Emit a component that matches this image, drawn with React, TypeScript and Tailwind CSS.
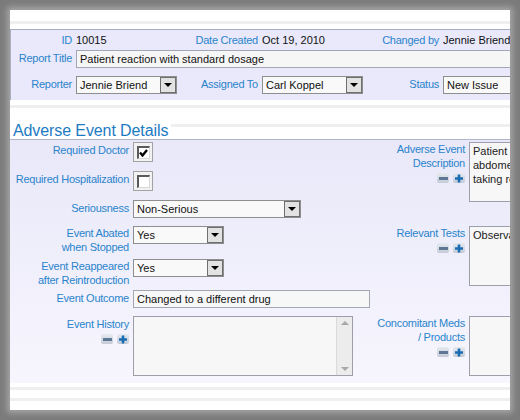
import React from 'react';

const LABEL = 'text-[#2a84cc] text-[11px] tracking-[-0.25px] text-right leading-[14px]';

function Select({ value, className }: { value: string; className: string }) {
  return (
    <div className={`flex items-center h-[18px] border border-[#8e8e8e] bg-[#f9f9f9] ${className}`}>
      <span className="flex-1 pl-[3px] text-[11px] text-[#111] leading-[16px] whitespace-nowrap overflow-hidden">{value}</span>
      <div className="w-[16px] h-[16px] border border-[#6f6f6f] bg-[#e2e2e2] flex items-center justify-center">
        <div className="w-0 h-0 border-l-[4px] border-r-[4px] border-t-[4px] border-l-transparent border-r-transparent border-t-black" />
      </div>
    </div>
  );
}

function Checkbox({ checked }: { checked?: boolean }) {
  return (
    <div className="w-[20px] h-[20px] border border-[#a2a2a2] bg-[#f2f2f2] flex items-center justify-center">
      <div className="w-[13px] h-[13px] border-t-2 border-l-2 border-r border-b border-t-[#5a5a5a] border-l-[#5a5a5a] border-r-[#d8d8d8] border-b-[#d8d8d8] bg-white flex items-center justify-center">
        {checked && (
          <svg width="9" height="8" viewBox="0 0 9 8">
            <path d="M1 3.5 L3.5 6.5 L8 1" stroke="#000" strokeWidth="2.4" fill="none" />
          </svg>
        )}
      </div>
    </div>
  );
}

function MinusPlus() {
  return (
    <div className="flex justify-end gap-[4px] mt-[3px]">
      <div className="w-[12px] h-[10px] rounded-[2px] bg-linear-to-b from-[#e6eaf0] to-[#c4cbd6] flex items-center justify-center">
        <div className="w-[9px] h-[3px] bg-[#5d7794]" />
      </div>
      <div className="w-[12px] h-[10px] rounded-[2px] bg-linear-to-b from-[#e6eaf0] to-[#c4cbd6] flex items-center justify-center">
        <svg width="10" height="9" viewBox="0 0 10 9">
          <path d="M5 0.5 V8.5 M1 4.5 H9" stroke="#1a6db3" strokeWidth="2.6" />
        </svg>
      </div>
    </div>
  );
}

function TextBox({ lines, className }: { lines: string[]; className: string }) {
  return (
    <div className={`border border-[#9c9eaa] bg-[#f7f7f7] pl-[3px] pt-[1px] text-[11px] leading-[14px] text-[#222] whitespace-nowrap overflow-hidden ${className}`}>
      {lines.map((l) => (
        <div key={l}>{l}</div>
      ))}
    </div>
  );
}

export default function App() {
  return (
    <div className="w-[520px] h-[420px] bg-[#7b7b7b] p-[10px] font-['Liberation_Sans',Arial,sans-serif]">
      <div className="w-[500px] h-[400px] bg-white overflow-hidden flex flex-col shadow-[0_0_6px_3px_#a6a6a6]">
        {/* top stripes */}
        <div className="h-[11px] shrink-0" />
        <div className="h-[3px] bg-[#efefef] shrink-0" />
        <div className="h-[5px] shrink-0" />

        {/* header panel */}
        <div className="h-[71px] shrink-0 bg-[#e9e9fb] border-t border-l border-[#a9aec0] grid grid-cols-[61px_110px_68px_108px_65px_1fr] grid-rows-[20px_18px_32px] gap-x-[4px]">
          <div className={`${LABEL} self-center`}>ID</div>
          <div className="self-center text-[11px] text-[#111]">10015</div>
          <div className={`${LABEL} self-center whitespace-nowrap`}>Date Created</div>
          <div className="self-center text-[11px] text-[#111] whitespace-nowrap">Oct 19, 2010</div>
          <div className={`${LABEL} self-center whitespace-nowrap`}>Changed by</div>
          <div className="self-center text-[11px] text-[#111] whitespace-nowrap">Jennie Briend</div>

          <div className={`${LABEL} pt-[1px] whitespace-nowrap`}>Report Title</div>
          <div className="col-span-5 border border-r-0 border-[#a3a7b3] bg-[#f6f6f6] pl-[3px] text-[11px] leading-[16px] text-[#111] whitespace-nowrap">
            Patient reaction with standard dosage
          </div>

          <div className={`${LABEL} pt-[9px]`}>Reporter</div>
          <div className="pt-[8px]">
            <Select value="Jennie Briend" className="w-[101px]" />
          </div>
          <div className={`${LABEL} pt-[9px] whitespace-nowrap`}>Assigned To</div>
          <div className="pt-[8px]">
            <Select value="Carl Koppel" className="w-[101px]" />
          </div>
          <div className={`${LABEL} pt-[9px]`}>Status</div>
          <div className="pt-[8px]">
            <div className="h-[18px] border border-r-0 border-[#8e8e8e] bg-[#f9f9f9] pl-[3px] text-[11px] leading-[16px] text-[#111] whitespace-nowrap">
              New Issue
            </div>
          </div>
        </div>

        {/* heading */}
        <div className="h-[5px] shrink-0" />
        <div className="h-[3px] bg-[#efefef] shrink-0" />
        <div className="h-[14px] shrink-0" />
        <div className="h-[17px] shrink-0 flex">
          <div className="pl-[3px] text-[16px] tracking-[-0.1px] leading-[17px] text-[#1c7bc3] whitespace-nowrap">Adverse Event Details</div>
          <div className="flex-1 ml-[3px] mt-[2px] h-[3px] bg-[#efefef]" />
        </div>

        {/* details panel */}
        <div className="h-[244px] shrink-0 bg-linear-to-b from-[#e8e8f9] to-[#f7f6fe] border-t border-[#b1b5c8] pt-[2px]">
          <div className="grid grid-cols-[119px_237px_91px_140px] grid-rows-[29px_29px_26px_33px_31px_26px_67px] gap-x-[4px]">
            <div className={`${LABEL} pt-[1px]`}>Required Doctor</div>
            <div>
              <Checkbox checked />
            </div>
            <div className="row-span-3">
              <div className={LABEL}>
                Adverse Event
                <br />
                Description
              </div>
              <MinusPlus />
            </div>
            <div className="row-span-3">
              <TextBox className="w-[140px] h-[60px]" lines={['Patient has reported severe', 'abdomen pain two hours after', 'taking regular dosage']} />
            </div>

            <div className={`${LABEL} pt-[1px] whitespace-nowrap`}>Required Hospitalization</div>
            <div>
              <Checkbox />
            </div>

            <div className={`${LABEL} pt-[1px]`}>Seriousness</div>
            <div>
              <Select value="Non-Serious" className="w-[168px]" />
            </div>

            <div className={LABEL}>
              Event Abated
              <br />
              when Stopped
            </div>
            <div>
              <Select value="Yes" className="w-[91px]" />
            </div>
            <div className="row-span-3">
              <div className={LABEL}>Relevant Tests</div>
              <MinusPlus />
            </div>
            <div className="row-span-3">
              <TextBox className="w-[140px] h-[60px]" lines={['Observation of the patient']} />
            </div>

            <div className={`${LABEL} whitespace-nowrap`}>
              Event Reappeared
              <br />
              after Reintroduction
            </div>
            <div>
              <Select value="Yes" className="w-[91px]" />
            </div>

            <div className={`${LABEL} pt-[1px]`}>Event Outcome</div>
            <div>
              <div className="w-[237px] h-[18px] border border-[#a3a7b3] bg-[#f7f7f7] pl-[3px] text-[11px] leading-[16px] text-[#111] whitespace-nowrap">
                Changed to a different drug
              </div>
            </div>

            <div>
              <div className={`${LABEL} pt-[1px]`}>Event History</div>
              <MinusPlus />
            </div>
            <div>
              <div className="w-[220px] h-[60px] border border-[#9c9eaa] bg-[#f7f7f7] flex justify-end">
                <div className="w-[16px] h-full bg-[#ececec] border-l border-[#dadada] flex flex-col items-center justify-between py-[4px]">
                  <div className="w-0 h-0 border-l-[4px] border-r-[4px] border-b-[4px] border-l-transparent border-r-transparent border-b-[#a8a8a8]" />
                  <div className="w-0 h-0 border-l-[4px] border-r-[4px] border-t-[4px] border-l-transparent border-r-transparent border-t-[#a8a8a8]" />
                </div>
              </div>
            </div>
            <div>
              <div className={`${LABEL} whitespace-nowrap`}>
                Concomitant Meds
                <br />/ Products
              </div>
              <MinusPlus />
            </div>
            <div>
              <TextBox className="w-[140px] h-[60px]" lines={['']} />
            </div>
          </div>
        </div>

        {/* bottom stripes */}
        <div className="h-[4px] shrink-0" />
        <div className="h-[3px] bg-[#efefef] shrink-0" />
        <div className="h-[8px] shrink-0" />
        <div className="h-[3px] bg-[#efefef] shrink-0" />
      </div>
    </div>
  );
}
